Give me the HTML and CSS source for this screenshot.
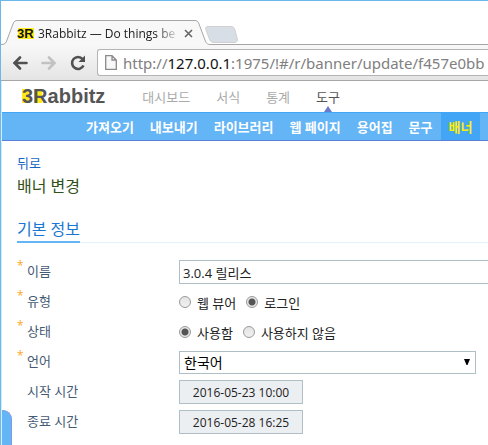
FILE: index.html
```
<!DOCTYPE html>
<html lang="ko">
<head>
  <meta charset="UTF-8" />
  <meta name="viewport" content="width=device-width, initial-scale=1.0" />
  <title>3Rabbitz</title>
  <link rel="stylesheet" href="styles.css">
</head>
<body>
  <div class="window">
    <div class="tab-strip">
      <div class="tab">
        <svg class="tab-shape" viewBox="0 0 210 26" width="210" height="26">
          <path d="M0 24.5 C4 24.5 5 23 6 20 L12 4 C13 1 14 .5 17 .5 H193 C196 .5 197 1 198 4 L204 20 C205 23 206 24.5 210 24.5 V26 H0 Z" fill="#f8f8f8" />
          <path d="M0 24.5 C4 24.5 5 23 6 20 L12 4 C13 1 14 .5 17 .5 H193 C196 .5 197 1 198 4 L204 20 C205 23 206 24.5 210 24.5" fill="none" stroke="#a6a6a6" />
        </svg>
        <span class="favicon">3R</span>
        <span class="tab-title">3Rabbitz — Do things be</span>
        <button class="tab-close" aria-label="Close tab">
          <svg viewBox="0 0 9 9" width="9" height="9"><path d="M1 1l7 7M8 1l-7 7" stroke="#666" stroke-width="1.6" /></svg>
        </button>
      </div>
      <button class="new-tab" aria-label="New tab">
        <svg viewBox="0 0 34 17" width="34" height="17"><path d="M3 .5H25C28 .5 29 1 30 4L32 12C33 15 32 16.5 29 16.500H9C6 16.500 5 15 4 12L1 4C.5 2 .5 .5 3 .5Z" fill="#d8dee6" stroke="#d0d0d0" /></svg>
      </button>
    </div>

    <div class="toolbar">
      <button class="tool" aria-label="Back">
        <svg viewBox="0 0 16 14" width="16" height="14"><path d="M8 1.500L2.500 7L8 12.500M3 7H14.500" fill="none" stroke="#505050" stroke-width="2.600" stroke-linecap="round" /></svg>
      </button>
      <button class="tool" aria-label="Forward">
        <svg viewBox="0 0 16 14" width="16" height="14"><path d="M8 1.500L13.500 7L8 12.500M13 7H1.500" fill="none" stroke="#c2c2c2" stroke-width="2.600" stroke-linecap="round" /></svg>
      </button>
      <button class="tool" aria-label="Reload">
        <svg viewBox="0 0 16 16" width="16" height="16"><path d="M12.600 4A6 6 0 1 0 13.500 10.500" fill="none" stroke="#505050" stroke-width="2.600" /><path d="M15 .5V7H8.500Z" fill="#505050" /></svg>
      </button>
      <div class="address">
        <svg viewBox="0 0 12 15" width="12" height="15"><path d="M.7 .7H7L11.300 5V14.300H.7ZM7 .7V5H11.300" fill="#f8f8f8" stroke="#8a8a8a" stroke-width="1.300" /></svg>
        <span class="url">http://<b>127.0.0.1</b>:1975/!#/r/banner/update/f457e0bb</span>
      </div>
    </div>

    <div class="page">
      <header class="site-header">
        <a href="#" class="logo"><span class="logo-mark">3R</span>abbitz</a>
        <nav class="main-nav">
          <a href="#">대시보드</a>
          <a href="#">서식</a>
          <a href="#">통계</a>
          <a href="#" class="active">도구</a>
        </nav>
      </header>
      <nav class="sub-nav">
        <a href="#">가져오기</a>
        <a href="#">내보내기</a>
        <a href="#">라이브러리</a>
        <a href="#">웹 페이지</a>
        <a href="#">용어집</a>
        <a href="#">문구</a>
        <a href="#" class="active">배너</a>
      </nav>

      <main class="content">
        <a href="#" class="back-link">뒤로</a>
        <h1>배너 변경</h1>
        <h2><span>기본 정보</span></h2>

        <form class="banner-form">
          <div class="row">
            <label class="row-label required" for="name">이름</label>
            <input type="text" class="text-box" id="name" value="3.0.4 릴리스">
          </div>
          <div class="row" role="radiogroup" aria-labelledby="typeLabel">
            <span class="row-label required" id="typeLabel">유형</span>
            <label class="option"><input type="radio" name="type">웹 뷰어</label>
            <label class="option"><input type="radio" name="type" checked>로그인</label>
          </div>
          <div class="row" role="radiogroup" aria-labelledby="stateLabel">
            <span class="row-label required" id="stateLabel">상태</span>
            <label class="option"><input type="radio" name="state" checked>사용함</label>
            <label class="option"><input type="radio" name="state">사용하지 않음</label>
          </div>
          <div class="row">
            <label class="row-label required" for="language">언어</label>
            <div class="select-box">
              <select id="language">
                <option>한국어</option>
              </select>
              <svg class="select-arrow" viewBox="0 0 6 6" width="6" height="6"><path d="M0 0H6L3.500 6H2.500Z" /></svg>
            </div>
          </div>
          <div class="row">
            <label class="row-label" for="start">시작 시간</label>
            <button type="button" class="date-button" id="start">2016-05-23 10:00</button>
          </div>
          <div class="row">
            <label class="row-label" for="end">종료 시간</label>
            <button type="button" class="date-button" id="end">2016-05-28 16:25</button>
          </div>
        </form>
      </main>
      <button class="side-handle" aria-label="Open panel"></button>
    </div>
  </div>
</body>
</html>
```
FILE: styles.css
```
:root {
  --blue: #64b5f6;
  --frame: #6ab8ec;
  --border: #b0bec5;
}

* {
  box-sizing: border-box;
}

body {
  margin: 0;
  overflow: hidden;
  font-family: "Open Sans", "Noto Sans CJK KR", sans-serif;
  font-size: 13px;
  background: #fff;
  color: #212121;
}

a {
  text-decoration: none;
}

button {
  padding: 0;
  border: none;
  background: none;
  font: inherit;
}

svg {
  display: block;
}

.window {
  display: flex;
  flex-direction: column;
  min-height: 100vh;
  border-top: 1px solid var(--frame);
  border-left: 1px solid var(--frame);
}

/* Browser tabs */
.tab-strip {
  display: flex;
  align-items: flex-end;
  height: 43px;
  padding-top: 19px;
}

.tab {
  position: relative;
  z-index: 1;
  display: flex;
  align-items: center;
  gap: 4px;
  width: 210px;
  height: 24px;
  padding: 2px 16px 0;
}

.tab-shape {
  position: absolute;
  left: 0;
  top: 0;
  z-index: -1;
}

.favicon {
  width: 17px;
  background: linear-gradient(#ffeb1a, #ffeb1a) center / 16px 11px no-repeat;
  color: #111;
  font: bold 13px "Liberation Sans", sans-serif;
}

.tab-title {
  width: 142px;
  white-space: nowrap;
  font-size: 12px;
  -webkit-mask-image: linear-gradient(to right, #000 118px, transparent 142px);
  mask-image: linear-gradient(to right, #000 118px, transparent 142px);
}

.new-tab {
  height: 19px;
  margin-left: -6px;
}

/* Browser toolbar */
.toolbar {
  display: flex;
  align-items: center;
  gap: 13px;
  height: 37px;
  padding-left: 11px;
  border-top: 1px solid #a6a6a6;
  border-bottom: 1px solid #a6a6a6;
  background: linear-gradient(#f8f8f8, #e4e4e4);
}

.address {
  display: flex;
  flex: 1;
  align-items: center;
  gap: 6px;
  height: 27px;
  min-width: 0;
  margin-left: -2px;
  padding-left: 7px;
  border: 1px solid #b4b4b4;
  border-right: none;
  border-radius: 3px 0 0 3px;
  background: #fff;
}

.url {
  flex: 1;
  white-space: nowrap;
  font-family: "Noto Sans", sans-serif;
  font-size: 15px;
  color: #808080;
}

.url b {
  font-weight: normal;
  color: #111;
}

/* Site header */
.page {
  position: relative;
  flex: 1;
  border-left: 1px solid #d8edfb;
}

.site-header {
  display: flex;
  align-items: center;
  height: 32px;
  padding-left: 20px;
  border-bottom: 1px solid #42a5f5;
}

.logo {
  color: #555;
  font: bold 20px "Liberation Sans", sans-serif;
}

.logo-mark {
  background:
    linear-gradient(#ffeb1a, #ffeb1a) 0 4px / 7px 14px no-repeat,
    linear-gradient(#ffeb1a, #ffeb1a) 12px 4px / 8px 14px no-repeat;
}

.main-nav {
  display: flex;
  align-self: stretch;
  gap: 26px;
  margin-left: 37px;
}

.main-nav a {
  position: relative;
  line-height: 32px;
  color: #aaa;
}

.main-nav .active {
  color: #555;
}

.main-nav .active::after {
  content: "";
  position: absolute;
  left: 50%;
  bottom: 0;
  margin-left: -4px;
  border: 4px solid transparent;
  border-top: none;
  border-bottom: 6px solid #6c7cc8;
}

.sub-nav {
  display: flex;
  height: 28px;
  padding-left: 76px;
  border-bottom: 1px solid #5c7fd6;
  background: var(--blue);
}

.sub-nav a {
  padding: 0 8px;
  line-height: 28px;
  font-weight: bold;
  white-space: nowrap;
  color: #fff;
}

.sub-nav .active {
  background: #42a5f5;
  color: #ffee00;
}

/* Banner form */
.content {
  padding: 12px 0 0 15px;
}

.back-link {
  display: block;
  line-height: 20px;
  color: #1565c0;
}

h1 {
  margin: 0;
  font-size: 16px;
  font-weight: normal;
  line-height: 26px;
  color: #33501a;
}

h2 {
  display: flex;
  margin: 18px 0 14px;
  border-bottom: 1px solid #e3f2fd;
  font-size: 16px;
  font-weight: normal;
  line-height: 24px;
  color: #1976d2;
}

h2 span {
  margin-bottom: -1px;
  border-bottom: 2px solid var(--blue);
}

.row {
  display: flex;
  align-items: center;
  height: 30px;
}

.row-label {
  position: relative;
  width: 162px;
  padding: 0 0 4px 10px;
  color: #455a74;
}

.required::before {
  content: "*";
  position: absolute;
  left: 0;
  top: -4px;
  font-size: 12px;
  color: #ffa726;
}

.text-box {
  flex: 1;
  height: 24px;
  min-width: 0;
  padding: 0 3px;
  border: 1px solid var(--border);
  border-right: none;
  font: inherit;
  color: #212121;
}

.option {
  display: flex;
  align-items: center;
  gap: 6px;
  margin-right: 10px;
}

.option input {
  appearance: none;
  width: 12px;
  height: 12px;
  margin: 0;
  border: 1px solid #999;
  border-radius: 50%;
  background: linear-gradient(#e4e4e4, #f0f0f0);
}

.option input:checked {
  background: radial-gradient(#555 0 3px, #e8e8e8 4px);
}

.select-box {
  position: relative;
  width: 297px;
}

.select-box select {
  display: block;
  appearance: none;
  width: 100%;
  height: 23px;
  padding: 0 4px;
  border: 1px solid var(--border);
  border-radius: 0;
  background: #fff;
  font: inherit;
  font-size: 14px;
  color: #000;
}

.select-arrow {
  position: absolute;
  right: 6px;
  top: 8px;
}

.date-button {
  width: 124px;
  height: 24px;
  border: 1px solid var(--border);
  background: #eceff1;
  font-size: 12px;
  color: #212121;
}

.side-handle {
  position: absolute;
  left: 0;
  bottom: 0;
  width: 10px;
  height: 35px;
  border: 1px solid #7f9ddc;
  border-width: 1px 1px 0 0;
  border-radius: 0 9px 0 0;
  background: var(--blue);
}
```
